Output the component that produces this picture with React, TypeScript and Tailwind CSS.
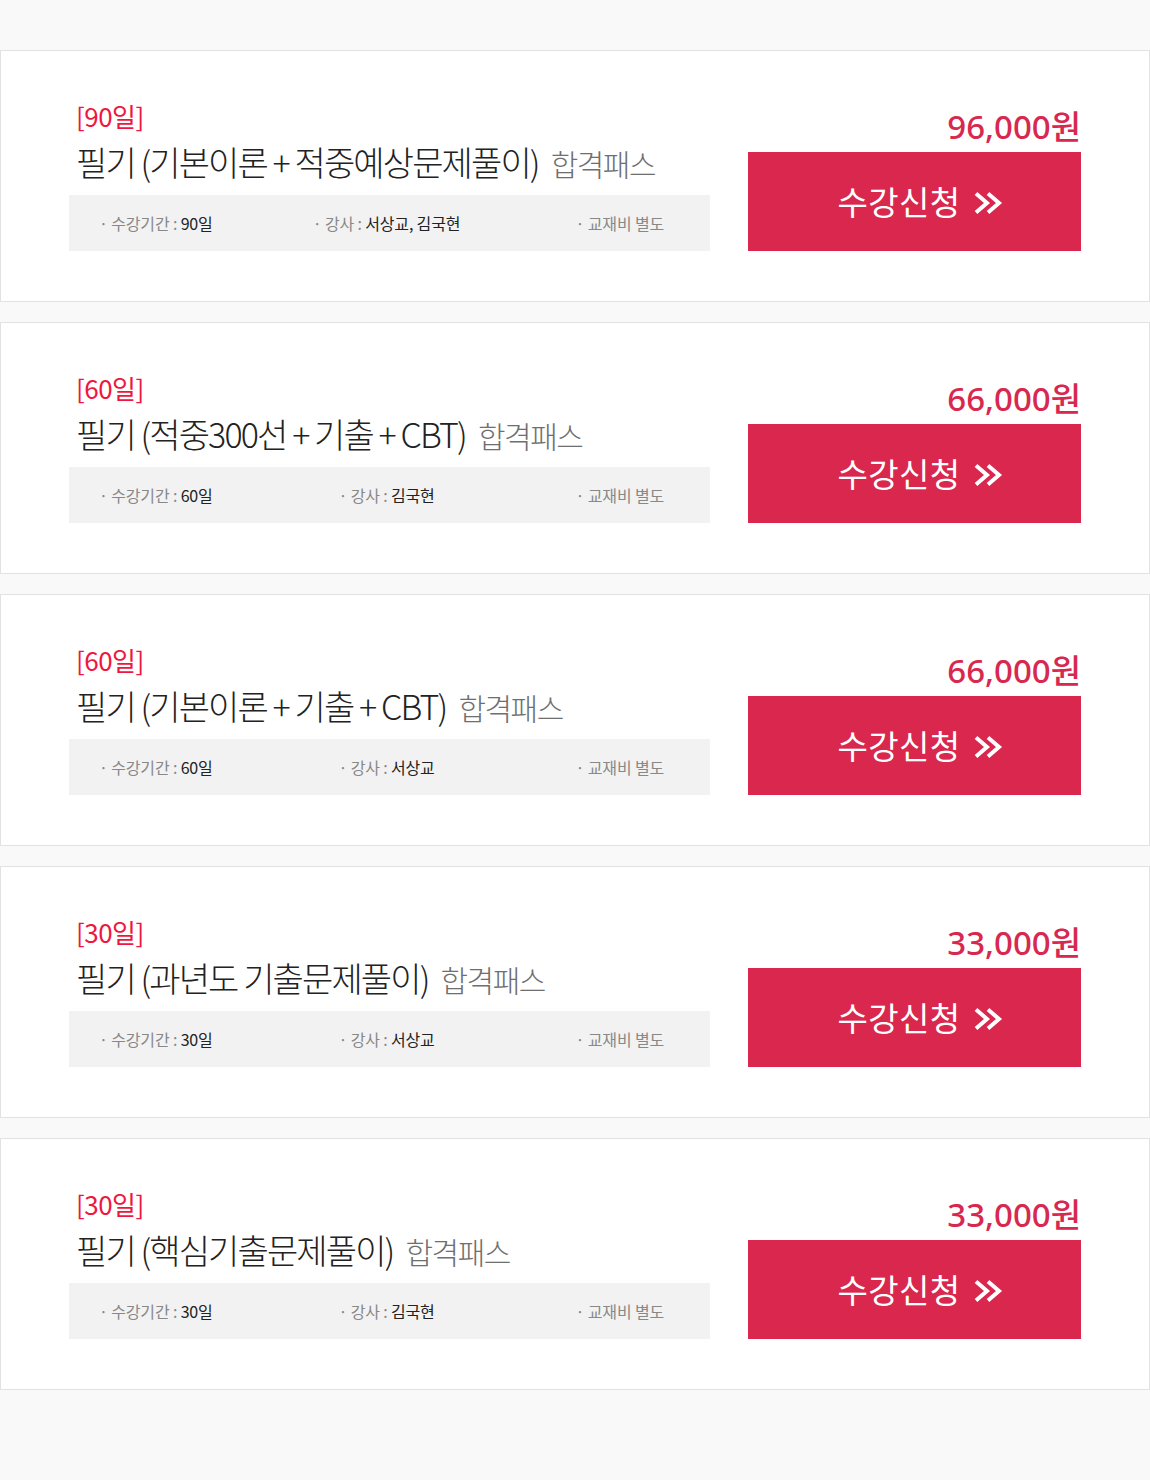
import React from "react";

type Course = {
  days: string;
  title: string;
  period: string;
  teacher: string;
  price: string;
};

const courses: Course[] = [
  { days: "[90일]", title: "필기 (기본이론 + 적중예상문제풀이)", period: "90일", teacher: "서상교, 김국현", price: "96,000원" },
  { days: "[60일]", title: "필기 (적중300선 + 기출 + CBT)", period: "60일", teacher: "김국현", price: "66,000원" },
  { days: "[60일]", title: "필기 (기본이론 + 기출 + CBT)", period: "60일", teacher: "서상교", price: "66,000원" },
  { days: "[30일]", title: "필기 (과년도 기출문제풀이)", period: "30일", teacher: "서상교", price: "33,000원" },
  { days: "[30일]", title: "필기 (핵심기출문제풀이)", period: "30일", teacher: "김국현", price: "33,000원" },
];

const cjk = { fontFamily: '"Noto Sans CJK KR", "Noto Sans", sans-serif' };
const priceFont = { fontFamily: '"Noto Sans", "Noto Sans CJK KR", sans-serif' };

function Chevrons() {
  return (
    <svg width="32" height="24" viewBox="0 0 32 24" fill="none" className="ml-[13px] mt-[2px]">
      <path d="M3 2.5 L14 12 L3 21.5" stroke="white" strokeWidth="4" strokeLinejoin="miter" />
      <path d="M15 2.5 L26 12 L15 21.5" stroke="white" strokeWidth="4" strokeLinejoin="miter" />
    </svg>
  );
}

function Card({ c }: { c: Course }) {
  return (
    <div className="border border-[#e2e2e2] bg-white pl-[68px] pr-[68px] pt-[49px] pb-[50px]">
      <div className="flex items-end">
        <div className="w-[641px] flex flex-col" style={cjk}>
          <div className="pl-[7px] text-[26px] leading-[32px] text-[#f0163f] tracking-[-0.02em]">{c.days}</div>
          <div className="pl-[7px] mt-[8px] text-[34px] leading-[44px] whitespace-nowrap font-light">
            <span className="text-[#222] tracking-[-0.055em]">{c.title}</span>
            <span className="text-[#6f6f6f] text-[30px] tracking-[-0.05em] ml-[12px]">합격패스</span>
          </div>
          <div className="mt-[10px] h-[56px] bg-[#f2f2f2] grid grid-cols-[190px_1fr_180px] items-center pl-[30px] pr-[46px] text-[16px] tracking-[-0.01em]">
            <div className="text-[#888]">
              · 수강기간 : <span className="text-[#222]">{c.period}</span>
            </div>
            <div className="text-center text-[#888]">
              · 강사 : <span className="text-[#222]">{c.teacher}</span>
            </div>
            <div className="text-right text-[#888]">· 교재비 별도</div>
          </div>
        </div>
        <div className="ml-[38px] w-[333px] flex flex-col items-end">
          <div className="text-[33px] leading-[40px] font-medium text-[#d8284f]" style={priceFont}>
            {c.price}
          </div>
          <button
            className="mt-[5px] w-[333px] h-[99px] bg-[#da274d] flex items-center justify-center text-white text-[33px] pl-[14px]"
            style={cjk}
          >
            <span className="tracking-[0.01em]">수강신청</span>
            <Chevrons />
          </button>
        </div>
      </div>
    </div>
  );
}

export default function App() {
  return (
    <div className="min-h-[1480px] w-[1150px] bg-[#f9f9f9] pt-[50px] flex flex-col gap-[20px]">
      {courses.map((c, i) => (
        <Card key={i} c={c} />
      ))}
    </div>
  );
}
